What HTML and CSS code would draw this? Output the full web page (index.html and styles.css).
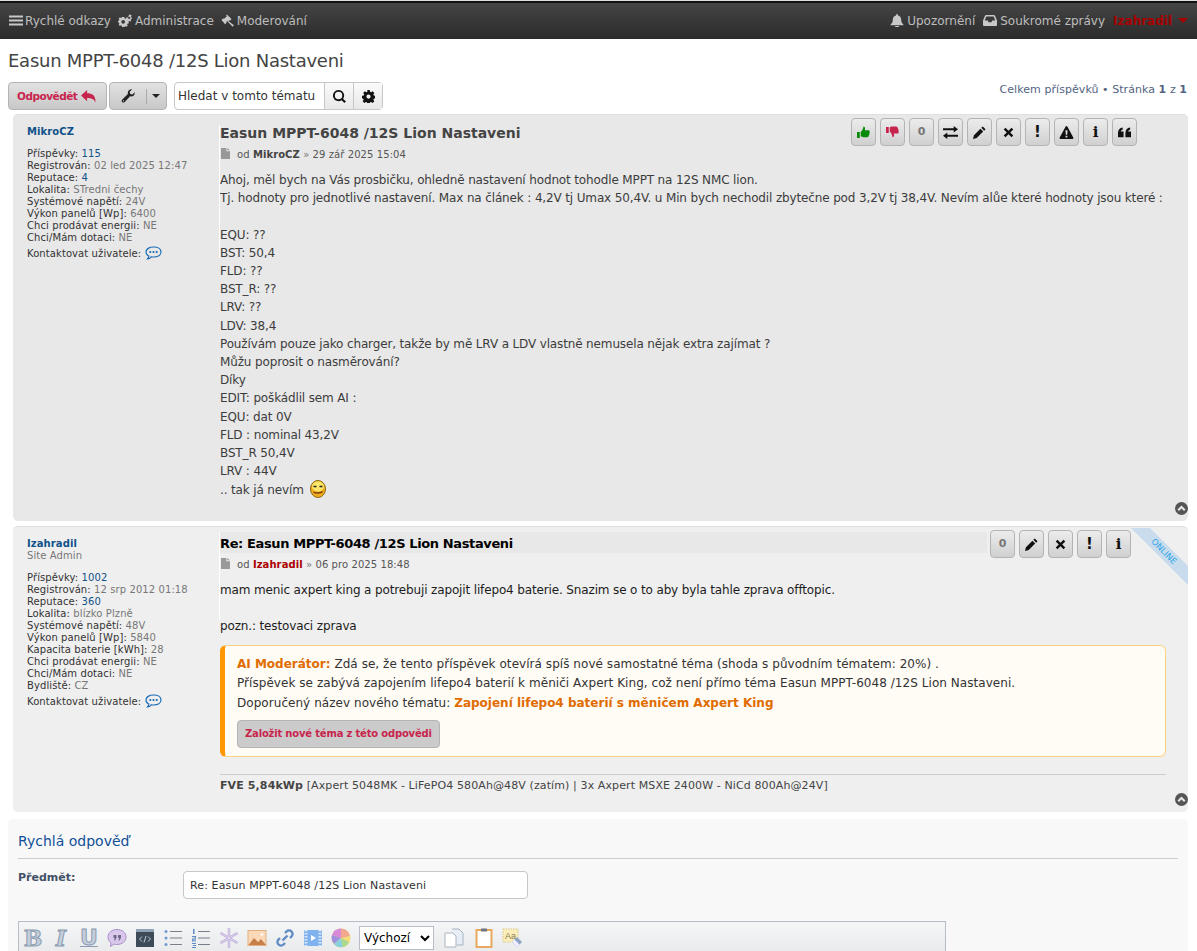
FILE: index.html
```html
<!DOCTYPE html>
<html lang="cs">
<head>
<meta charset="utf-8">
<title>Easun MPPT-6048 /12S Lion Nastaveni</title>
<link rel="stylesheet" href="styles.css">
</head>
<body>
<svg class="sprite" width="0" height="0">
  <symbol id="i-bars" viewBox="0 0 14 12"><path d="M0 1h14v2H0zM0 5h14v2H0zM0 9h14v2H0z"/></symbol>
  <symbol id="i-cogs" viewBox="0 0 16 14"><path fill-rule="evenodd" d="M4.300 3.300h2.400l.3 1.200 1 .5 1.100-.6 1.300 1.400-.7 1 .4 1 1.300.3v2l-1.300.3-.4 1 .7 1-1.300 1.400-1.100-.7-1 .5-.3 1.100H4.300L4 12.600l-1-.4-1.100.6L.7 11.400l.7-1L1 9.500 0 9.200V7.300l1-.3.400-1-.7-1L2 3.600l1 .6 1-.4zM5.500 6.400a2 2 0 1 0 0 4 2 2 0 0 0 0-4z"/><path fill-rule="evenodd" d="M12.500 0l.5 1 1-.2.6 1-.8.8.2 1 1 .4v1.100l-1 .4-.4 1 .5.900-.9.800-.9-.6-1 .3-.3 1h-1.100l-.4-1-1-.4-.2-1.100 1-.1.200-1-.8-.8.600-1 1 .3.800-.7.100-1zM12 3a1.200 1.200 0 1 0 0 2.400A1.200 1.200 0 0 0 12 3z"/></symbol>
  <symbol id="i-gavel" viewBox="0 0 14 14"><path d="M5.800.5L10.800 5.500 9 7.300 8.300 6.600 7.300 7.600 13.400 12 12 13.600 6 7.500 5 8.500l.7.700-1.800 1.800L0 6.500l1.800-1.800.7.700L5.800 2.300 5 1.500z"/></symbol>
  <symbol id="i-bell" viewBox="0 0 14 14"><path d="M7 0a1 1 0 0 1 1 1v.5c2.300.4 3.500 2.200 3.500 4.500 0 3 .8 4 2.500 5.500v.5H0v-.5C1.700 10 2.500 9 2.500 6c0-2.300 1.200-4.100 3.500-4.500V1a1 1 0 0 1 1-1zM5 13h4a2 2 0 0 1-4 0z"/></symbol>
  <symbol id="i-inbox" viewBox="0 0 14 12"><path fill-rule="evenodd" d="M3 .5h8a1 1 0 0 1 .9.600L14 6v4.500a1 1 0 0 1-1 1H1a1 1 0 0 1-1-1V6l2.100-4.900A1 1 0 0 1 3 .5zM3.300 2L1.800 6h3l.8 1.800h2.800L9.200 6h3l-1.500-4z"/></symbol>
  <symbol id="i-reply" viewBox="0 0 16 14"><path d="M6.500 0v3.500C11.500 3.500 16 5.500 15.500 13.500 14 9.500 11 8.500 6.500 8.500V12L0 6z"/></symbol>
  <symbol id="i-wrench" viewBox="0 0 14 14"><path d="M13.700 3.300c.4 2.200-1.500 4.800-4.600 4L3.500 13.200c-1.500 1.300-3.700-.7-2.400-2.400l5.800-5.700C6.100 2 8.800 0 11 .4L8.700 2.800l.5 2.200 2.200.6zM2.500 11.200a.6.600 0 1 0 0 1.200.6.600 0 0 0 0-1.200z"/></symbol>
  <symbol id="i-search" viewBox="0 0 14 14"><path fill-rule="evenodd" d="M6 0a6 6 0 0 1 4.900 9.400l3 3-1.600 1.600-3-3A6 6 0 1 1 6 0zm0 2a4 4 0 1 0 0 8 4 4 0 0 0 0-8z"/></symbol>
  <symbol id="i-cog" viewBox="0 0 14 14"><path fill-rule="evenodd" d="M5.700 0h2.600l.4 1.900 1.100.5L11.500 1.300l1.800 1.800-1.100 1.700.5 1.100 1.900.4v2.600l-1.900.4-.5 1.100 1.100 1.700-1.800 1.800-1.700-1.100-1.100.5-.4 1.900H5.700l-.4-1.900-1.100-.5-1.700 1.100L.7 12.100 1.800 10.400l-.5-1.100L0 8.900V6.300l1.900-.4.500-1.100L1.300 3.100 3 1.300l1.700 1.100 1.100-.5zM7 4.800a2.300 2.300 0 1 0 0 4.600 2.300 2.300 0 0 0 0-4.600z"/></symbol>
  <symbol id="i-file" viewBox="0 0 10 12"><path d="M0 0h6v3.500h4V12H0zM7 0l3 2.500H7z"/></symbol>
  <symbol id="i-up" viewBox="0 0 12 12"><path d="M6 0a6 6 0 1 1 0 12A6 6 0 0 1 6 0z"/><path d="M6 3.200L2.300 6.900l1.400 1.400L6 6l2.300 2.300 1.400-1.400z" fill="#e6e6e6"/></symbol>
  <symbol id="i-chat" viewBox="0 0 17 14"><path fill="none" stroke="currentColor" stroke-width="1.200" d="M8.500 1C12.700 1 16 3 16 6s-3.300 5-7.500 5c-.8 0-1.500 0-2.200-.2C5.300 12 3.800 13 2.500 13c.8-.8 1.300-2 1.300-3C2 9.200 1 7.700 1 6c0-3 3.300-5 7.500-5z"/><circle cx="5.300" cy="6" r="1.100" fill="currentColor"/><circle cx="8.500" cy="6" r="1.100" fill="currentColor"/><circle cx="11.700" cy="6" r="1.100" fill="currentColor"/></symbol>
  <symbol id="i-up-thumb" viewBox="0 0 14 14"><path d="M0 6.500h3V13H0zM4 6.500c1.500-1.500 2.500-3 3-6 1.500 0 2 1.500 1.500 4h4c1 0 1.500 1 1 1.800.5.800.3 1.500-.3 2 .3.800 0 1.500-.6 1.800 0 1-.5 1.900-1.600 1.900H7c-1.300 0-2-.5-3-1z"/></symbol>
  <symbol id="i-down-thumb" viewBox="0 0 14 14"><path d="M0 1h3v6.500H0zM4 1.500C5 1 5.700.5 7 .5h4c1.100 0 1.600.9 1.600 1.900.6.300.9 1 .6 1.800.6.500.8 1.200.3 2 .5.800 0 1.800-1 1.800h-4c.5 2.500 0 4-1.500 4-.5-3-1.500-4.500-3-6z"/></symbol>
  <symbol id="i-exchange" viewBox="0 0 14 12"><path d="M0 2h10V0l4 3-4 3V4H0zM14 8H4V6L0 9l4 3v-2h10z"/></symbol>
  <symbol id="i-pencil" viewBox="0 0 14 14"><path d="M10.500.5l3 3-1.500 1.500-3-3zM8 3l3 3-7 7-4 1 1-4z"/></symbol>
  <symbol id="i-x" viewBox="0 0 12 12"><path d="M2.700.8L6 4.100 9.300.8l1.900 1.900L7.900 6l3.300 3.300-1.900 1.900L6 7.900 2.700 11.200.8 9.300 4.100 6 .8 2.700z"/></symbol>
  <symbol id="i-warn" viewBox="0 0 15 14"><path fill-rule="evenodd" d="M7.500 0c.4 0 .7.200.9.500l6.400 11.800c.4.800-.1 1.700-.9 1.700H1.100c-.8 0-1.300-.9-.9-1.700L6.600.5C6.800.2 7.100 0 7.500 0zM6.400 4.500l.3 5h1.600l.3-5zM6.500 10.500v2h2v-2z"/></symbol>
  <symbol id="i-quote" viewBox="0 0 14 12"><path d="M0 6.500C0 3 1.800 1 5 .5V3C3.500 3.300 3 4 3 5h3v6H0zM8 6.500C8 3 9.800 1 13 .5V3c-1.500.3-2 1-2 2h3v6H8z"/></symbol>
</svg>

<nav class="navbar">
  <ul class="nav-group">
    <li class="nav-item"><svg class="nav-icon"><use href="#i-bars"/></svg>Rychlé odkazy</li>
    <li class="nav-item"><svg class="nav-icon nav-icon-wide"><use href="#i-cogs"/></svg>Administrace</li>
    <li class="nav-item"><svg class="nav-icon"><use href="#i-gavel"/></svg>Moderování</li>
  </ul>
  <ul class="nav-group nav-group-right">
    <li class="nav-item"><svg class="nav-icon"><use href="#i-bell"/></svg>Upozornění</li>
    <li class="nav-item"><svg class="nav-icon"><use href="#i-inbox"/></svg>Soukromé zprávy</li>
    <li class="nav-item nav-user">Izahradil<span class="caret caret-red"></span></li>
  </ul>
</nav>

<main class="page">
  <h2 class="topic-title">Easun MPPT-6048 /12S Lion Nastaveni</h2>

  <div class="action-bar">
    <a class="btn btn-reply">Odpovědět<svg class="reply-icon"><use href="#i-reply"/></svg></a>
    <a class="btn btn-tools"><svg class="tool-icon"><use href="#i-wrench"/></svg><span class="tool-split"></span><span class="caret caret-small"></span></a>
    <div class="search-box">
      <span class="search-text">Hledat v tomto tématu</span>
      <span class="search-btn"><svg class="search-icon"><use href="#i-search"/></svg></span>
      <span class="search-btn"><svg class="search-icon"><use href="#i-cog"/></svg></span>
    </div>
    <div class="pagination">Celkem příspěvků • Stránka <strong>1</strong> z <strong>1</strong></div>
  </div>

  <article class="post post-first">
    <span class="divider divider-first"></span>
    <aside class="profile">
      <a class="author">MikroCZ</a>
      <dl class="fields">
        <div><dt>Příspěvky:</dt> <dd class="link">115</dd></div>
        <div><dt>Registrován:</dt> <dd>02 led 2025 12:47</dd></div>
        <div><dt>Reputace:</dt> <dd class="link">4</dd></div>
        <div><dt>Lokalita:</dt> <dd>STredni čechy</dd></div>
        <div><dt>Systémové napětí:</dt> <dd>24V</dd></div>
        <div><dt>Výkon panelů [Wp]:</dt> <dd>6400</dd></div>
        <div><dt>Chci prodávat energii:</dt> <dd>NE</dd></div>
        <div><dt>Chci/Mám dotaci:</dt> <dd>NE</dd></div>
      </dl>
      <div class="contact">Kontaktovat uživatele: <svg class="chat-icon"><use href="#i-chat"/></svg></div>
    </aside>
    <div class="postbody">
      <div class="post-head post-head-first">
        <h3 class="post-title">Easun MPPT-6048 /12S Lion Nastaveni</h3>
        <ul class="post-buttons">
          <li class="pbtn"><svg class="pic green"><use href="#i-up-thumb"/></svg></li>
          <li class="pbtn"><svg class="pic rose"><use href="#i-down-thumb"/></svg></li>
          <li class="pbtn count">0</li>
          <li class="pbtn"><svg class="pic pic-wide"><use href="#i-exchange"/></svg></li>
          <li class="pbtn"><svg class="pic"><use href="#i-pencil"/></svg></li>
          <li class="pbtn"><svg class="pic small"><use href="#i-x"/></svg></li>
          <li class="pbtn mark">!</li>
          <li class="pbtn"><svg class="pic pic-wide"><use href="#i-warn"/></svg></li>
          <li class="pbtn mark-i">i</li>
          <li class="pbtn"><svg class="pic"><use href="#i-quote"/></svg></li>
        </ul>
      </div>
      <p class="post-meta"><svg class="file-icon"><use href="#i-file"/></svg>od <b class="meta-author">MikroCZ</b> <span class="meta-sep">»</span> 29 zář 2025 15:04</p>
      <div class="content">Ahoj, měl bych na Vás prosbičku, ohledně nastavení hodnot tohodle MPPT na 12S NMC lion.<br>
Tj. hodnoty pro jednotlivé nastavení. Max na článek : 4,2V tj Umax 50,4V. u Min bych nechodil zbytečne pod 3,2V tj 38,4V. Nevím alůe které hodnoty jsou které :<br>
<br>
EQU: ??<br>
BST: 50,4<br>
FLD: ??<br>
BST_R: ??<br>
LRV: ??<br>
LDV: 38,4<br>
Používám pouze jako charger, takže by mě LRV a LDV vlastně nemusela nějak extra zajímat ?<br>
Můžu poprosit o nasměrování?<br>
Díky<br>
EDIT: poškádlil sem AI :<br>
EQU: dat 0V<br>
FLD : nominal 43,2V<br>
BST_R 50,4V<br>
LRV : 44V<br>
.. tak já nevím <svg class="smiley" viewBox="0 0 16 18"><ellipse cx="8" cy="9" rx="7.500" ry="8.500" fill="#f0ac20" stroke="#8a6a10"/><ellipse cx="8" cy="6.500" rx="6" ry="5" fill="#fde668"/><path d="M3.500 6.500h3M9.500 6.500h3" stroke="#222" stroke-width="1.400"/><path d="M3.500 12c2 1.500 7 1.500 9-.5" fill="none" stroke="#7a3a10" stroke-width="1.500"/></svg></div>
    </div>
    <svg class="to-top"><use href="#i-up"/></svg>
  </article>

  <article class="post post-second">
    <span class="divider divider-second"></span>
    <aside class="profile">
      <a class="author">Izahradil</a>
      <div class="rank">Site Admin</div>
      <dl class="fields">
        <div><dt>Příspěvky:</dt> <dd class="link">1002</dd></div>
        <div><dt>Registrován:</dt> <dd>12 srp 2012 01:18</dd></div>
        <div><dt>Reputace:</dt> <dd class="link">360</dd></div>
        <div><dt>Lokalita:</dt> <dd>blízko Plzně</dd></div>
        <div><dt>Systémové napětí:</dt> <dd>48V</dd></div>
        <div><dt>Výkon panelů [Wp]:</dt> <dd>5840</dd></div>
        <div><dt>Kapacita baterie [kWh]:</dt> <dd>28</dd></div>
        <div><dt>Chci prodávat energii:</dt> <dd>NE</dd></div>
        <div><dt>Chci/Mám dotaci:</dt> <dd>NE</dd></div>
        <div><dt>Bydliště:</dt> <dd>CZ</dd></div>
      </dl>
      <div class="contact">Kontaktovat uživatele: <svg class="chat-icon"><use href="#i-chat"/></svg></div>
    </aside>
    <div class="postbody">
      <div class="post-head">
        <h3 class="post-title post-title-re">Re: Easun MPPT-6048 /12S Lion Nastaveni</h3>
        <ul class="post-buttons">
          <li class="pbtn count">0</li>
          <li class="pbtn"><svg class="pic"><use href="#i-pencil"/></svg></li>
          <li class="pbtn"><svg class="pic small"><use href="#i-x"/></svg></li>
          <li class="pbtn mark">!</li>
          <li class="pbtn mark-i">i</li>
        </ul>
      </div>
      <p class="post-meta"><svg class="file-icon"><use href="#i-file"/></svg>od <b class="meta-admin">Izahradil</b> <span class="meta-sep">»</span> 06 pro 2025 18:48</p>
      <div class="content content-dark">mam menic axpert king a potrebuji zapojit lifepo4 baterie. Snazim se o to aby byla tahle zprava offtopic.<br>
<br>
pozn.: testovaci zprava</div>
      <div class="ai-box">
        <div class="ai-line"><b class="ai-label">AI Moderátor:</b> Zdá se, že tento příspěvek otevírá spíš nové samostatné téma (shoda s původním tématem: 20%) .</div>
        <div class="ai-line">Příspěvek se zabývá zapojením lifepo4 baterií k měniči Axpert King, což není přímo téma Easun MPPT-6048 /12S Lion Nastaveni.</div>
        <div class="ai-line">Doporučený název nového tématu: <b class="ai-label">Zapojení lifepo4 baterií s měničem Axpert King</b></div>
        <a class="btn btn-split">Založit nové téma z této odpovědi</a>
      </div>
      <div class="signature"><b>FVE 5,84kWp</b> [Axpert 5048MK - LiFePO4 580Ah@48V (zatím) | 3x Axpert MSXE 2400W - NiCd 800Ah@24V]</div>
    </div>
    <div class="ribbon"><span class="ribbon-text">ONLINE</span></div>
    <svg class="to-top"><use href="#i-up"/></svg>
  </article>

  <section class="quick-reply">
    <h2 class="qr-title">Rychlá odpověď</h2>
    <div class="qr-row">
      <label class="qr-label">Předmět:</label>
      <input class="qr-input" type="text" value="Re: Easun MPPT-6048 /12S Lion Nastaveni">
    </div>
    <div class="toolbar">
      <span class="tb">B</span>
      <span class="tb tb-i">I</span>
      <span class="tb tb-u">U</span>
      <svg class="tb-svg" viewBox="0 0 20 20"><path d="M10 1.500c5 0 9 3 9 7.500s-4 7.500-9 7.500c-1 0-2-.1-3-.4L3.500 18.500l.5-3.500C2 13.500 1 11.500 1 9c0-4.500 4-7.500 9-7.500z" fill="#d9c8ec" stroke="#a890cc"/><path d="M6.500 7h3v3l-1.500 2.500H7l.7-2.500H6.500zM11 7h3v3l-1.500 2.500h-1l.7-2.500H11z" fill="#6f6a8a"/></svg>
      <svg class="tb-svg" viewBox="0 0 20 20"><rect x="1" y="1" width="18" height="18" fill="#3d4a58"/><rect x="1" y="1" width="18" height="3" fill="#8fa3b5"/><path d="M7 8.500l-2.500 2.500L7 13.500M13 8.500l2.500 2.500-2.500 2.500M11 8l-2 6.500" fill="none" stroke="#c9d6e2" stroke-width=".9"/></svg>
      <svg class="tb-svg" viewBox="0 0 20 20"><g fill="#6f9bd1"><circle cx="3" cy="3.500" r="1.500"/><circle cx="3" cy="10" r="1.500"/><circle cx="3" cy="16.500" r="1.500"/></g><path d="M7 3.500h12M7 10h12M7 16.500h12" stroke="#777f88" stroke-width="1"/></svg>
      <svg class="tb-svg" viewBox="0 0 20 20"><g fill="#5f8cc4"><rect x="2" y="1" width="1.500" height="5"/><rect x="1" y="8" width="4" height="1.200"/><rect x="3.800" y="9" width="1.200" height="1.500"/><rect x="1" y="10.500" width="4" height="1.200"/><rect x="1" y="11.500" width="1.200" height="1.500"/><rect x="1" y="12.500" width="4" height="1"/><rect x="1" y="15" width="4" height="1"/><rect x="2" y="17" width="3" height="1"/><rect x="1" y="19" width="4" height="1"/></g><path d="M7 3.500h12M7 10h12M7 16.500h12" stroke="#777f88" stroke-width="1"/></svg>
      <svg class="tb-svg" viewBox="0 0 20 20"><path d="M10 0v20M1.500 5l17 10M18.500 5l-17 10" stroke="#b9a8d8" stroke-width="2.400"/><path d="M10 0v20M1.500 5l17 10M18.500 5l-17 10" stroke="#ece6f6" stroke-width=".8"/></svg>
      <svg class="tb-svg" viewBox="0 0 20 20"><rect x="1" y="2.500" width="18" height="15" fill="#fbd9b8" stroke="#e0b080"/><path d="M1.500 17l5.500-7 4 4 3-3 5 6z" fill="#c8804a"/><circle cx="15" cy="6.500" r="1.300" fill="#fff"/></svg>
      <svg class="tb-svg" viewBox="0 0 20 20"><path d="M7.500 12.500l5-5M10 5l1.500-1.500a3.500 3.500 0 0 1 5 5L15 10M10 15l-1.500 1.500a3.500 3.500 0 0 1-5-5L5 10" fill="none" stroke="#5f8cc4" stroke-width="2.400"/></svg>
      <svg class="tb-svg" viewBox="0 0 20 20"><rect x="1" y="2" width="18" height="16" fill="#7fb2ee"/><path d="M3 2v16M17 2v16" stroke="#d8e6f7" stroke-width="3" stroke-dasharray="1.500 1.500"/><path d="M8 7l5 3-5 3z" fill="#fff"/></svg>
      <svg class="tb-svg" viewBox="0 0 20 20"><circle cx="10" cy="10" r="9.500" fill="#f5dc7a"/><path d="M10 10V.5A9.500 9.500 0 0 0 1 7z" fill="#d88ad8"/><path d="M10 10L1 7a9.500 9.500 0 0 0 2 9z" fill="#a090e0"/><path d="M10 10l-7 6a9.500 9.500 0 0 0 9 3z" fill="#8ad0e0"/><path d="M10 10l2 9a9.500 9.500 0 0 0 6-5z" fill="#a8d890"/><path d="M10 10l9-2a9.500 9.500 0 0 0-9-7.500z" fill="#f0a890"/></svg>
      <select class="tb-select"><option>Výchozí</option></select>
      <svg class="tb-svg" viewBox="0 0 20 20"><path d="M8 1h7l4 4v12h-6" fill="#e6edf4" stroke="#a8b4c0"/><path d="M1 5h8l3 3v11H1z" fill="#fff" stroke="#a8b4c0"/></svg>
      <svg class="tb-svg tb-clip" viewBox="0 0 20 20"><rect x="2.500" y="2" width="15" height="17" fill="#fff" stroke="#e8a860" stroke-width="2"/><rect x="7" y="0.500" width="6" height="3" fill="#6f7780"/></svg>
      <svg class="tb-svg tb-eraser" viewBox="0 0 22 20"><rect x="1" y="1" width="15" height="13" fill="#fbeebb" stroke="#d9c88a" stroke-dasharray="1.500 1"/><text x="3" y="11" font-size="9" fill="#8a7a50" font-family="Liberation Sans">Aa</text><path d="M10 14l5-5 5 5-5 5z" fill="#8fa3c5"/><path d="M10 14l2.500-2.500 5 5L15 19z" fill="#eef"/></svg>
    </div>
  </section>
</main>
</body>
</html>
```
FILE: styles.css
```css
* { box-sizing: border-box; }
html, body { margin: 0; padding: 0; height: 951px; overflow: hidden; }
body { background: #fff; color: #333; font: 13px/1.4 "DejaVu Sans", Verdana, sans-serif; }
ul { list-style: none; margin: 0; padding: 0; }
h2, h3, p, dl, dd { margin: 0; }
.sprite { position: absolute; }

.navbar { height: 39px; display: flex; justify-content: space-between; align-items: center; padding: 2px 9px 0 9px; background: linear-gradient(#464646, #2b2b2b); border-top: 1px solid #ddd; box-shadow: inset 0 2px 0 #111; color: #bdbdbd; font-size: 12px; }
.nav-group { display: flex; gap: 7px; }
.nav-group-right { gap: 8px; }
.nav-item { display: flex; align-items: center; gap: 2px; }
.nav-group-right .nav-item { gap: 3px; }
.nav-icon { width: 14px; height: 13px; fill: #c8c8c8; }
.nav-icon-wide { width: 15px; }
.nav-user { color: #a80000; font-weight: 700; }
.caret { width: 0; height: 0; border: 5px solid transparent; border-top-color: #222; border-bottom: 0; }
.caret-red { border-top-color: #a80000; margin-left: 3px; }
.caret-small { border-width: 4px; border-bottom: 0; }

.page { padding: 0 9px 0 8px; }
.topic-title { font-size: 18px; letter-spacing: -.25px; font-weight: 400; color: #444; line-height: 24px; padding-top: 10px; }
.action-bar { display: flex; align-items: center; height: 28px; margin-top: 9px; }
.btn { display: inline-flex; align-items: center; border: 1px solid #b4b4b4; border-radius: 4px; background: linear-gradient(#e2e2e2, #c8c8c8); font-weight: 700; color: #c8254e; font-size: 10.500px; }
.btn-reply { width: 99px; height: 28px; padding-left: 8px; gap: 4px; letter-spacing: -.5px; }
.reply-icon { width: 15px; height: 13px; fill: #c8254e; }
.btn-tools { width: 58px; height: 28px; margin-left: 2px; padding-left: 11px; color: #222; }
.tool-icon { width: 14px; height: 14px; fill: #222; }
.tool-split { width: 1px; height: 15px; background: #aaa; margin: 0 5px 0 11px; }
.search-box { display: flex; align-items: stretch; height: 28px; width: 209px; margin-left: 7px; border: 1px solid #c7c7c7; border-radius: 4px; background: #fff; }
.search-text { flex: 1; padding-left: 3px; line-height: 26px; font-size: 12px; color: #333; }
.search-btn { width: 29px; display: flex; align-items: center; justify-content: center; background: linear-gradient(#fafafa, #e8e8e8); border-left: 1px solid #c7c7c7; }
.search-icon { width: 13px; height: 13px; fill: #111; }
.pagination { margin-left: auto; align-self: flex-start; font-size: 11px; letter-spacing: .06px; color: #536482; margin-right: 1px; }

.post { position: relative; display: flex; margin-left: 5px; border-radius: 5px; }
.post-first { height: 407px; margin-top: 4px; background: #e8e8e8; border-top: 1px solid #e0e0e0; }
.post-second { height: 286px; margin-top: 5px; background: #efefef; border-top: 1px solid #e0e0e0; }
.divider { position: absolute; left: 206px; width: 1px; background: #fff; }
.divider-first { top: 10px; height: 133px; }
.divider-second { top: 5px; height: 88px; }
.profile { width: 207px; flex: none; padding: 11px 0 0 14px; font-size: 10px; letter-spacing: .09px; line-height: 12px; color: #333; }
.author { display: block; color: #105289; font-weight: 700; }
.rank { color: #777; }
.fields { margin-top: 10px; }
.fields dt { display: inline; }
.fields dd { display: inline; color: #777; }
.fields dd.link { color: #105289; }
.contact { display: flex; align-items: center; gap: 4px; margin-top: 2px; height: 16px; }
.chat-icon { width: 17px; height: 14px; color: #1a6cb5; margin-top: -3px; }

.postbody { flex: 1; min-width: 0; }
.post-head { display: flex; gap: 3px; padding-right: 57px; padding-top: 3px; }
.post-head-first { padding-right: 51px; margin-bottom: 2px; }
.post-title { flex: 1; font-size: 14px; line-height: 20px; color: #444; margin-top: 5px; }
.post-title-re { color: #000; background: #e8e8e8; height: 21px; margin-top: 2px; padding-top: 2px; font-size: 13px; letter-spacing: -.38px; line-height: 19px; }
.post-buttons { display: flex; gap: 4px; }
.pbtn { width: 25px; height: 28px; display: flex; align-items: center; justify-content: center; border: 1px solid #b4b4b4; border-radius: 4px; background: linear-gradient(#ececec, #d0d0d0); font-weight: 700; color: #111; }
.pbtn.count { color: #777; font-size: 11px; }
.pbtn.mark { font-size: 15px; }
.pbtn.mark-i { font-size: 15px; font-family: "DejaVu Serif", serif; }
.pic { width: 13px; height: 13px; fill: #111; }
.pic-wide { width: 15px; }
.pic.small { width: 11px; height: 11px; }
.pic.green { fill: #0a8a0a; }
.pic.rose { fill: #c8254e; }
.post-meta { font-size: 10px; letter-spacing: .08px; color: #555; line-height: 14px; }
.file-icon { width: 9px; height: 11px; fill: #999; margin: 0 7px 0 1px; vertical-align: -1px; }
.meta-author { color: #444; }
.meta-admin { color: #aa0000; }
.meta-sep { color: #777; }
.content { font-size: 12px; letter-spacing: -.14px; line-height: 18.2px; color: #3c3c3c; margin-top: 9px; }
.content-dark { color: #1c1c1c; }
.smiley { width: 16px; height: 18px; margin-left: 3px; vertical-align: -4px; }
.to-top { position: absolute; right: 0; bottom: 6px; width: 13px; height: 13px; fill: #555; }
.ai-box { margin-top: 9px; margin-right: 22px; height: 112px; padding: 9px 12px; border: 1px solid #ffd27f; border-left: 5px solid #ff9800; border-radius: 6px; background: #fffbf5; font-size: 12px; letter-spacing: .05px; line-height: 19.500px; color: #333; }
.ai-label { color: #e06c00; letter-spacing: 0; }
.btn-split { height: 28px; padding: 0 7px; margin-top: 7px; background: #cbcbcb; font-size: 10px; letter-spacing: -.18px; }
.signature { margin-top: 17px; margin-right: 22px; padding-top: 3px; border-top: 1px solid #ccc; font-size: 11px; letter-spacing: .11px; line-height: 15px; color: #444; }

.ribbon { position: absolute; top: 1px; right: 0; width: 57px; height: 57px; display: flex; align-items: center; justify-content: center; clip-path: polygon(0 0, 19px 0, 57px 38px, 57px 57px); background: #c9dcee; }
.ribbon-text { color: #2aa5e8; font-size: 8.500px; transform: translate(4.500px, -5px) rotate(45deg); }

.quick-reply { margin-top: 7px; height: 140px; padding: 10px 10px 0; border-radius: 5px 5px 0 0; background: #f8f8f8; }
.qr-title { font-size: 14px; font-weight: 400; color: #115098; line-height: 24px; padding-bottom: 5px; border-bottom: 1px solid #ccc; }
.qr-row { display: flex; margin-top: 12px; }
.qr-label { width: 165px; font-size: 11px; font-weight: 700; color: #425067; line-height: 14px; }
.qr-input { width: 345px; height: 28px; border: 1px solid #c7c7c7; border-radius: 4px; padding: 0 6px; background: #fff; font: 11px "DejaVu Sans", sans-serif; letter-spacing: .12px; color: #333; }
.toolbar { display: flex; align-items: center; gap: 8px; width: 928px; height: 34px; margin-top: 22px; padding: 0 4px; background: linear-gradient(#f4f5f6, #e8eaec); border: 1px solid #b8bcc8; }
.tb { width: 20px; flex: none; font: 700 22px/1 "DejaVu Serif", serif; color: #c3cedb; -webkit-text-stroke: 1px #8c9cb0; text-align: center; }
.tb-i { font-style: italic; }
.tb-u { text-decoration: underline; text-decoration-thickness: 1px; font-family: "DejaVu Sans", sans-serif; }
.tb-svg { width: 20px; height: 20px; flex: none; }
.tb-clip { margin-left: 2px; }
.tb-eraser { width: 22px; }
.tb-select { width: 75px; height: 24px; flex: none; margin-right: 2px; font: 12px "DejaVu Sans", sans-serif; background: #fff; border: 1px solid #b8bcc8; }
```
